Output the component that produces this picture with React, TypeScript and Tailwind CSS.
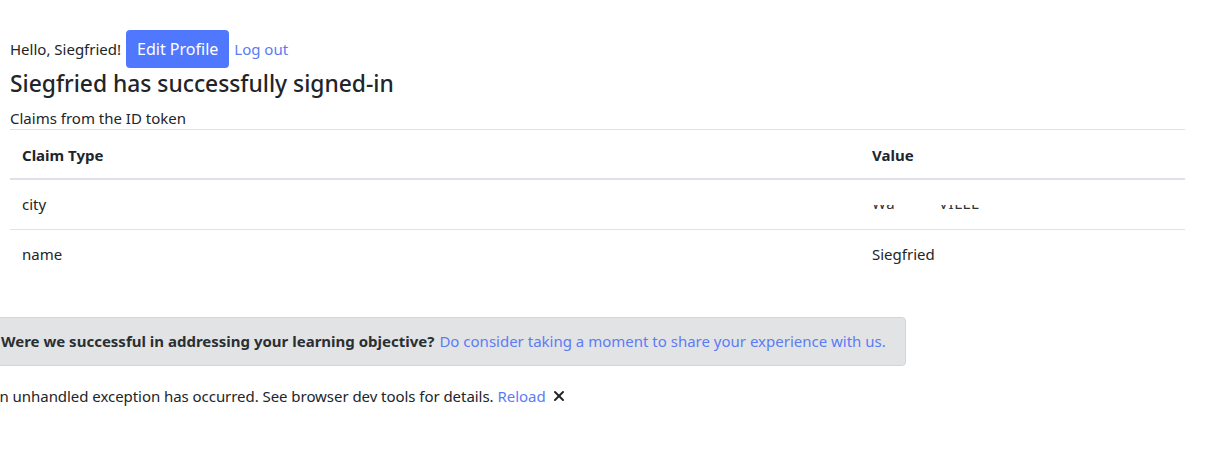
import { X } from 'lucide-react';

const claims = [
  { type: 'city', value: null },
  { type: 'name', value: 'Siegfried' },
];

// Value in the city row is partly hidden in the screenshot; only the bottom sliver shows.
const Redacted = () => (
  <div className="h-[24px] flex items-end">
    <div className="h-[7px] mb-[4px] overflow-hidden">
      <div className="-mt-[11px] text-[15px] leading-[18px] text-[#333] tracking-[0.5px]">
        Wa<span className="inline-block w-[44px]" />VILLE
      </div>
    </div>
  </div>
);

export default function App() {
  return (
    <div
      className="min-h-[450px] bg-white text-[#212529] text-[15px] overflow-hidden"
      style={{ fontFamily: '"Noto Sans", "Open Sans", Arial, sans-serif' }}
    >
      <div className="pt-[30px] px-[10px] w-[1195px]">
        <div className="flex items-baseline">
          <span>Hello, Siegfried!</span>
          <button className="ml-[5px] bg-[#5078ff] text-white text-[16px] px-[11px] h-[38px] rounded-[4px]">
            Edit Profile
          </button>
          <a href="#" className="ml-[5px] text-[#5b7cf5]">Log out</a>
        </div>
        <h3 className="mt-[1px] text-[22.8px] font-medium leading-[30px] text-[#212529]">
          Siegfried has successfully signed-in
        </h3>
        <p className="mt-[9px] leading-[20px]">Claims from the ID token</p>

        <table className="mt-[1px] w-full border-t border-[#dee2e6] border-collapse">
          <thead>
            <tr className="border-b-2 border-[#dee2e6]">
              <th className="text-left font-bold px-3 pt-[13px] pb-[11px] leading-[24px] w-[850px]">Claim Type</th>
              <th className="text-left font-bold px-3 pt-[13px] pb-[11px] leading-[24px]">Value</th>
            </tr>
          </thead>
          <tbody>
            {claims.map((c) => (
              <tr key={c.type} className="border-b border-[#dee2e6] last:border-b-0">
                <td className="px-3 py-[12px] leading-[24.5px]">{c.type}</td>
                <td className="px-3 py-[12px] leading-[24.5px]">{c.value ?? <Redacted />}</td>
              </tr>
            ))}
          </tbody>
        </table>
      </div>

      <div className="mt-[39px] -ml-[16px] w-[922px] h-[49px] flex items-center px-[16px] bg-[#e2e3e5] border border-[#d3d6d8] rounded-[4px]">
        <span className="font-bold text-[#2b2f32]">Were we successful in addressing your learning objective?</span>
        <a href="#" className="ml-[5px] text-[#5b7cf5]">Do consider taking a moment to share your experience with us.</a>
      </div>

      <div className="mt-[18px] -ml-[10px] flex items-center h-[24px] tracking-[-0.05px]">
        <span>An unhandled exception has occurred. See browser dev tools for details.</span>
        <a href="#" className="ml-[4px] text-[#5b7cf5]">Reload</a>
        <X className="ml-[5px] w-[16px] h-[16px] text-[#212529]" strokeWidth={3} />
      </div>
    </div>
  );
}
